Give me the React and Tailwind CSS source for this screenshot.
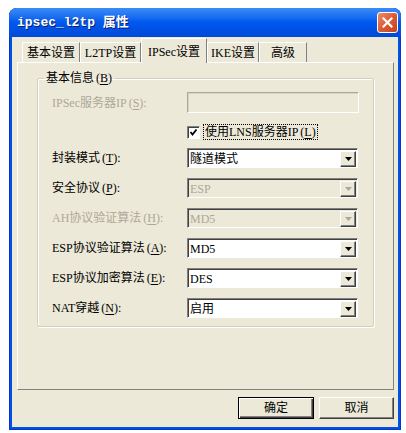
import React from 'react';

const FONT = "font-['Liberation_Serif','Noto_Sans_CJK_SC',serif]";

const Key = ({ k }) => (
  <span className="ml-[2px]">
    (<span className="underline underline-offset-2">{k}</span>)
  </span>
);

const Arrow = ({ disabled }) => (
  <svg width="7" height="4" viewBox="0 0 7 4">
    <polygon points="0,0 7,0 3.5,4" fill={disabled ? '#aca899' : '#000'} />
  </svg>
);

const Select = ({ value, disabled }) => (
  <div
    className={`w-[171px] h-[20px] flex items-center border-t border-l border-[#808080] border-r border-b border-r-white border-b-white shadow-[inset_1px_1px_0_#404040] ${
      disabled ? 'bg-[#ECE9D8] text-[#aca899]' : 'bg-white text-black'
    }`}
  >
    <span className="flex-1 pl-[2px] pt-[1px] leading-none">{value}</span>
    <div className="w-[16px] h-[16px] mr-[1px] mt-[1px] flex items-center justify-center bg-[#ECE9D8] border-t border-l border-white border-r border-b border-r-[#404040] border-b-[#404040] shadow-[inset_-1px_-1px_0_#808080]">
      <Arrow disabled={disabled} />
    </div>
  </div>
);

const Row = ({ label, k, value, disabled, labelGray }) => (
  <div className="flex items-center h-[20px]">
    <div className={`w-[135px] ${labelGray ? 'text-[#aca899]' : 'text-black'}`}>
      {label}
      <Key k={k} />:
    </div>
    <Select value={value} disabled={disabled} />
  </div>
);

const tabs = [
  { label: '基本设置', w: 'w-[58px]' },
  { label: 'L2TP设置', w: 'w-[61px]' },
  { label: 'IPSec设置', w: 'w-[66px]', active: true },
  { label: 'IKE设置', w: 'w-[52px]' },
  { label: '高级', w: 'w-[48px]' },
];

export default function App() {
  return (
    <div className={`w-[406px] h-[433px] bg-white pt-[8px] pl-[9px] text-[12px] ${FONT}`}>
      <div className="w-[392px] h-[422px] rounded-t-[8px] bg-[#0053E1] flex flex-col shadow-[inset_0_0_0_1px_#0831D9]">
        {/* title bar */}
        <div className="h-[29px] shrink-0 flex items-center pl-[8px] pr-[3px] rounded-t-[8px] bg-linear-to-b from-[#3B8CF5] via-[#0058EE] to-[#0049D8]">
          <span className="flex-1 text-white font-bold text-[13px] font-['Liberation_Mono','Noto_Sans_CJK_SC',monospace] [text-shadow:1px_1px_0_#0a1e6a]">
            ipsec_l2tp 属性
          </span>
          <div className="w-[21px] h-[21px] rounded-[3px] border border-white bg-linear-to-br from-[#EE8A68] via-[#DD5A33] to-[#C2431E] flex items-center justify-center">
            <svg width="11" height="11" viewBox="0 0 11 11">
              <path d="M1.5 1.5 L9.5 9.5 M9.5 1.5 L1.5 9.5" stroke="#fff" strokeWidth="2.2" strokeLinecap="square" />
            </svg>
          </div>
        </div>

        {/* body */}
        <div className="flex-1 mx-[3px] mb-[3px] bg-[#ECE9D8] flex flex-col">
          {/* tabs */}
          <div className="h-[25px] pl-[10px] flex items-end shrink-0">
            {tabs.map((t) =>
              t.active ? (
                <div
                  key={t.label}
                  className={`${t.w} h-[25px] -mb-[1px] relative z-10 bg-[#ECE9D8] border-t border-l border-white border-r border-r-[#808080] flex items-start justify-center pt-[4px]`}
                >
                  {t.label}
                </div>
              ) : (
                <div
                  key={t.label}
                  className={`${t.w} h-[20px] border-t border-l border-white border-r border-r-[#808080] flex items-center justify-center pt-[1px]`}
                >
                  {t.label}
                </div>
              )
            )}
          </div>

          {/* panel */}
          <div className="ml-[5px] w-[377px] h-[328px] shrink-0 border-t border-l border-white border-r border-b border-r-[#808080] border-b-[#808080]">
            <fieldset className="ml-[19px] mt-[8px] w-[337px] h-[256px] border border-[#D0D0BF] shadow-[inset_1px_1px_0_#fff,1px_1px_0_#fff] rounded-[2px]">
              <legend className="ml-[6px] px-[2px] leading-[14px]">
                基本信息
                <Key k="B" />
              </legend>
              <div className="pl-[14px] pt-[7px] flex flex-col">
                <div className="flex items-center h-[21px]">
                  <div className="w-[135px] text-[#aca899]">
                    IPSec服务器IP
                    <Key k="S" />:
                  </div>
                  <div className="w-[172px] h-[21px] bg-[#ECE9D8] border-t border-l border-[#aca899] border-r border-b border-r-white border-b-white shadow-[inset_1px_1px_0_#d8d4c4]" />
                </div>

                <div className="flex items-center h-[16px] mt-[11px] pl-[135px]">
                  <div className="w-[13px] h-[13px] bg-white border-t border-l border-[#808080] border-r border-b border-r-white border-b-white shadow-[inset_1px_1px_0_#404040] flex items-center justify-center">
                    <svg width="9" height="9" viewBox="0 0 9 9">
                      <path d="M1.5 4 L3.5 6.5 L7.5 1.5" stroke="#000" strokeWidth="1.8" fill="none" />
                    </svg>
                  </div>
                  <div className="ml-[3px] h-[16px] px-[1px] border border-dotted border-black flex items-center">
                    使用LNS服务器IP
                    <Key k="L" />
                  </div>
                </div>

                <div className="flex flex-col gap-[10px] mt-[8px]">
                  <Row label="封装模式" k="T" value="隧道模式" />
                  <Row label="安全协议" k="P" value="ESP" disabled />
                  <Row label="AH协议验证算法" k="H" value="MD5" disabled labelGray />
                  <Row label="ESP协议验证算法" k="A" value="MD5" />
                  <Row label="ESP协议加密算法" k="E" value="DES" />
                  <Row label="NAT穿越" k="N" value="启用" />
                </div>
              </div>
            </fieldset>
          </div>

          {/* buttons */}
          <div className="mt-[7px] flex justify-end pr-[4px] gap-[5px]">
            <button className="w-[76px] h-[22px] border border-black bg-[#ECE9D8] shadow-[inset_1px_1px_0_#fff,inset_-1px_-1px_0_#404040,inset_-2px_-2px_0_#808080] flex items-center justify-center">
              确定
            </button>
            <button className="w-[75px] h-[22px] bg-[#ECE9D8] border-t border-l border-white border-r border-b border-r-[#404040] border-b-[#404040] shadow-[inset_-1px_-1px_0_#808080] flex items-center justify-center">
              取消
            </button>
          </div>
        </div>
      </div>
    </div>
  );
}
